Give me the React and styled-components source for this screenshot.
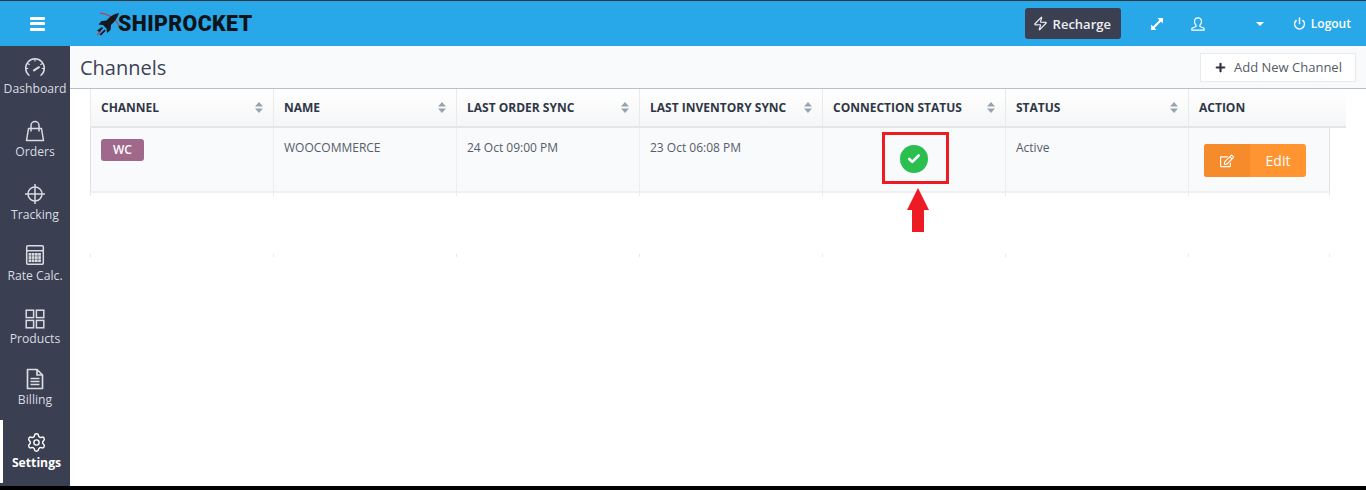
import React from 'react';
import styled, { createGlobalStyle } from 'styled-components';
import { Settings, Zap, Power, Plus, Check } from 'lucide-react';
import { FaRegEdit } from 'react-icons/fa';

const columns = [
  { title: 'Channel', sort: true },
  { title: 'Name', sort: true },
  { title: 'Last Order Sync', sort: true },
  { title: 'Last Inventory Sync', sort: true },
  { title: 'Connection Status', sort: true },
  { title: 'Status', sort: true },
  { title: 'Action', sort: false },
];

const GaugeIcon = () => (
  <svg width="22" height="22" viewBox="0 0 22 22" fill="none" stroke="currentColor" strokeWidth="1.5" strokeLinecap="round">
    <path d="M5 18.200A9.300 9.300 0 1 1 17 18.200" />
    <path d="M11 2v2M3.600 6.500l1.600 1M18.400 6.500l-1.600 1M1.800 11.500h2M18.200 11.500h2" strokeWidth="1.200" />
    <path d="M10 13.400l5-3.200" strokeWidth="2" />
  </svg>
);

const BagIcon = () => (
  <svg width="20" height="22" viewBox="0 0 20 22" fill="none" stroke="currentColor" strokeWidth="1.500">
    <path d="M3.500 8.500h13l2 12H1.500z" strokeLinejoin="round" />
    <path d="M6 11.500V5.600a4 4 0 0 1 8 0v5.900" />
  </svg>
);

const TargetIcon = () => (
  <svg width="22" height="22" viewBox="0 0 22 22" fill="none" stroke="currentColor" strokeWidth="1.500">
    <circle cx="11" cy="11" r="7" />
    <path d="M11 1v20M1 11h20" />
  </svg>
);

const CalcIcon = () => (
  <svg width="20" height="22" viewBox="0 0 20 22">
    <rect x="1.700" y="1.700" width="16.600" height="18.600" rx="1" fill="none" stroke="currentColor" strokeWidth="1.500" />
    <rect x="1.700" y="6" width="16.600" height="1.500" fill="currentColor" />
    {[9, 12.200, 15.400].map(y =>
      [3.600, 6.800, 10, 13.200].map(x => (
        <rect key={`${x}-${y}`} x={x} y={y} width="2.700" height="2.700" fill="currentColor" />
      )),
    )}
  </svg>
);

const GridIcon = () => (
  <svg width="20" height="20" viewBox="0 0 20 20" fill="none" stroke="currentColor" strokeWidth="1.500">
    <rect x="1.200" y="1.200" width="7.400" height="7.400" />
    <rect x="11.400" y="1.200" width="7.400" height="7.400" />
    <rect x="1.200" y="11.400" width="7.400" height="7.400" />
    <rect x="11.400" y="11.400" width="7.400" height="7.400" />
  </svg>
);

const DocIcon = () => (
  <svg width="18" height="22" viewBox="0 0 18 22" fill="none" stroke="currentColor" strokeWidth="1.700">
    <path d="M1.500 1.500h9.500l5.500 5.500v13.500h-15z" strokeLinejoin="round" />
    <path d="M11 1.500V7h5.500" />
    <path d="M4.500 10.500h9M4.500 13.500h9M4.500 16.500h9" />
  </svg>
);

const ExpandIcon = () => (
  <svg width="12" height="12" viewBox="0 0 12 12" fill="#fff">
    <path d="M6.500 0H12v5.500L10 3.500 3.500 10 5.500 12H0V6.500L2 8.500 8.500 2z" />
  </svg>
);

const UserIcon = () => (
  <svg width="14" height="14" viewBox="0 0 14 14" fill="none" stroke="#fff" strokeWidth="1.200">
    <path d="M7 .8c-2.200 0-3.500 1.600-3.500 3.700 0 1.600.8 3 1.600 3.700v1.300L.9 11.300v1.900h12.200v-1.900L8.900 9.500V8.200c.8-.7 1.600-2.100 1.600-3.700C10.500 2.400 9.200.8 7 .8z" strokeLinejoin="round" />
  </svg>
);

const RocketLogo = () => (
  <svg width="24" height="26" viewBox="0 0 24 26">
    <path d="M3 2c8 .5 15 5 20 14M0 24l4-4" fill="none" stroke="#d0303c" strokeWidth="1.100" />
    <path d="M22 2C16.500 3 12.500 6 9.500 9.500L4.500 10 1.500 13.500l4.500.5 3.500 3.500.5 4.500 3.500-3 .5-5C17.500 11 20.500 7 22 2z" fill="#14181f" />
    <path d="M0 19.500l5-3.500 1.200 1.200-4 3.800zM2.500 23.500l5-5 1.200 1.200L4 24.500z" fill="#14181f" />
  </svg>
);

const SortIcon = () => (
  <svg width="8" height="11" viewBox="0 0 8 11" fill="#98a3ad">
    <path d="M4 0l4 4.500H0zM0 6.500h8L4 11z" />
  </svg>
);

const GlobalStyle = createGlobalStyle`
  html, body {
    margin: 0;
    height: 490px;
    overflow: hidden;
    background: #fff;
    font-family: "Open Sans", "Liberation Sans", sans-serif;
  }
  * {
    box-sizing: border-box;
  }
`;

const Page = styled.div`
  display: flex;
  flex-direction: column;
  width: 1366px;
  height: 490px;
`;

const Header = styled.header`
  display: flex;
  align-items: center;
  flex: 0 0 46px;
  border-top: 1px solid #33383f;
  background: #29a8e9;
  color: #fff;
`;

const Burger = styled.div`
  display: flex;
  flex-direction: column;
  gap: 2.500px;
  margin-left: 30px;
  width: 15px;

  span {
    height: 3px;
    background: #fff;
    border-radius: 1px;
  }
`;

const Logo = styled.div`
  display: flex;
  align-items: center;
  margin-left: 52px;
`;

const LogoText = styled.span`
  display: inline-block;
  margin-left: -3px;
  color: #10141a;
  font-family: "Roboto", "Liberation Sans", sans-serif;
  font-size: 22px;
  font-weight: 900;
  letter-spacing: 0.4px;
  line-height: 26px;
  transform: scaleX(0.97);
  transform-origin: left center;
`;

const HeaderRight = styled.div`
  display: flex;
  align-items: center;
  margin-left: auto;
  padding-right: 15px;
`;

const RechargeButton = styled.div`
  display: flex;
  align-items: center;
  justify-content: center;
  gap: 5px;
  width: 96px;
  height: 31px;
  padding-right: 2px;
  border-radius: 3px;
  background: #3a3f51;
  color: #eceef2;
  font-size: 13px;
  font-weight: 600;
`;

const HeaderIcon = styled.span`
  display: flex;
  align-items: center;
  margin-left: ${({ $gap }) => $gap}px;
`;

const Caret = styled.span`
  margin-left: 51px;
  border-left: 4px solid transparent;
  border-right: 4px solid transparent;
  border-top: 4px solid #fff;
`;

const Logout = styled.span`
  margin-left: 5px;
  font-size: 12px;
  font-weight: 600;
`;

const Body = styled.div`
  display: flex;
  flex: 1;
  min-height: 0;
`;

const Sidebar = styled.nav`
  flex: 0 0 70px;
  background: #3a3f51;
`;

const NavItem = styled.div`
  display: flex;
  flex-direction: column;
  align-items: center;
  justify-content: flex-end;
  height: ${({ $h }) => $h}px;
  padding-bottom: 12px;
  border-left: ${({ $active }) => ($active ? '3px solid #fff' : 'none')};
  color: ${({ $active }) => ($active ? '#fff' : '#d9dce2')};
  font-size: 12.200px;
  font-weight: ${({ $active }) => ($active ? 700 : 400)};
  line-height: 16px;
  white-space: nowrap;

  svg {
    margin-bottom: 2px;
  }
`;

const Main = styled.main`
  flex: 1;
  min-width: 0;
`;

const TitleBar = styled.div`
  display: flex;
  align-items: center;
  justify-content: space-between;
  height: 43px;
  padding: 0 10px;
  background: #f9fafc;
  border-bottom: 1px solid #bcbfc4;
`;

const Title = styled.h1`
  margin: 0;
  color: #3c4354;
  font-size: 20px;
  font-weight: 400;
`;

const AddButton = styled.div`
  display: flex;
  align-items: center;
  gap: 7px;
  width: 156px;
  height: 29px;
  padding-left: 13px;
  border: 1px solid #e8eaed;
  background: #fff;
  color: #555b68;
  font-size: 13px;
`;

const Table = styled.div`
  margin-left: 20px;
`;

const Grid = styled.div`
  display: grid;
  grid-template-columns: repeat(6, 183px) ${({ $last }) => $last}px;
`;

const HeadCell = styled.div`
  display: flex;
  align-items: center;
  justify-content: space-between;
  height: 39px;
  padding: 0 10px;
  border-left: 1px solid #e8eaec;
  border-bottom: 2px solid #e3e5e8;
  background: linear-gradient(#ffffff, #f5f6f7);
  color: #2f3747;
  font-size: 12px;
  font-weight: 700;
  text-transform: uppercase;
`;

const Cell = styled.div`
  position: relative;
  height: 65px;
  padding: 11px 10px 0;
  border-left: 1px solid ${({ $first }) => ($first ? '#dfe1e4' : '#eceef0')};
  border-right: ${({ $end }) => ($end ? '1px solid #e2e4e7' : 'none')};
  border-bottom: 2px solid #eef0f2;
  background: #f9fafc;
  color: #565c68;
  font-size: 12px;
  line-height: 18px;
`;

const Badge = styled.span`
  display: inline-flex;
  align-items: center;
  justify-content: center;
  width: 43px;
  height: 22px;
  border-radius: 3px;
  background: #a0698c;
  color: #fff;
  font-size: 12px;
  font-weight: 600;
`;

const StatusCell = styled(Cell)`
  display: flex;
  justify-content: center;
  padding-top: 17px;
`;

const CheckCircle = styled.span`
  display: flex;
  align-items: center;
  justify-content: center;
  width: 28px;
  height: 28px;
  border-radius: 50%;
  background: #2bbf50;
  color: #fff;
`;

const Highlight = styled.div`
  position: absolute;
  top: 4px;
  left: 59px;
  width: 67px;
  height: 52px;
  border: 3px solid #ed1c24;
`;

const RedArrow = styled.svg`
  position: absolute;
  top: 60px;
  left: 84px;
  z-index: 1;
`;

const EditButton = styled.div`
  display: flex;
  width: 102px;
  height: 33px;
  margin: 5px 0 0 5px;
  border-radius: 3px;
  overflow: hidden;
  background: #ff9431;
  color: #fff;
  font-size: 14px;
`;

const EditIcon = styled.span`
  display: flex;
  align-items: center;
  justify-content: center;
  width: 46px;
  background: #f58b2a;
`;

const EditLabel = styled.span`
  flex: 1;
  align-self: center;
  text-align: center;
`;

const Tick = styled.div`
  height: 3px;
  border-left: 1px solid #e6e8ea;
  border-right: ${({ $end }) => ($end ? '1px solid #e6e8ea' : 'none')};
`;

const TickRow = styled(Grid)`
  margin-top: ${({ $top }) => $top}px;
`;

const Footer = styled.div`
  flex: 0 0 4px;
  background: #000;
`;

const navItems = [
  { label: 'Dashboard', icon: <GaugeIcon />, h: 63 },
  { label: 'Orders', icon: <BagIcon />, h: 63 },
  { label: 'Tracking', icon: <TargetIcon />, h: 63 },
  { label: 'Rate Calc.', icon: <CalcIcon />, h: 61 },
  { label: 'Products', icon: <GridIcon />, h: 63 },
  { label: 'Billing', icon: <DocIcon />, h: 61 },
  { label: 'Settings', icon: <Settings size={21} strokeWidth={1.6} />, h: 63, active: true },
];

const App = () => {
  return (
    <Page>
      <GlobalStyle />
      <Header>
        <Burger>
          <span />
          <span />
          <span />
        </Burger>
        <Logo>
          <RocketLogo />
          <LogoText>SHIPROCKET</LogoText>
        </Logo>
        <HeaderRight>
          <RechargeButton>
            <Zap size={15} strokeWidth={2} />
            Recharge
          </RechargeButton>
          <HeaderIcon $gap={30}>
            <ExpandIcon />
          </HeaderIcon>
          <HeaderIcon $gap={28}>
            <UserIcon />
          </HeaderIcon>
          <Caret />
          <HeaderIcon $gap={29}>
            <Power size={13} strokeWidth={2.8} />
          </HeaderIcon>
          <Logout>Logout</Logout>
        </HeaderRight>
      </Header>
      <Body>
        <Sidebar>
          {navItems.map(item => (
            <NavItem key={item.label} $h={item.h} $active={item.active}>
              {item.icon}
              {item.label}
            </NavItem>
          ))}
        </Sidebar>
        <Main>
          <TitleBar>
            <Title>Channels</Title>
            <AddButton>
              <Plus size={13} strokeWidth={4} color="#2f3340" />
              Add New Channel
            </AddButton>
          </TitleBar>
          <Table>
            <Grid $last={158}>
              {columns.map(col => (
                <HeadCell key={col.title}>
                  {col.title}
                  {col.sort && <SortIcon />}
                </HeadCell>
              ))}
            </Grid>
            <Grid $last={142}>
              <Cell $first>
                <Badge>WC</Badge>
              </Cell>
              <Cell>WOOCOMMERCE</Cell>
              <Cell>24 Oct 09:00 PM</Cell>
              <Cell>23 Oct 06:08 PM</Cell>
              <StatusCell>
                <CheckCircle>
                  <Check size={14} strokeWidth={4.5} />
                </CheckCircle>
                <Highlight />
                <RedArrow width="22" height="44" viewBox="0 0 22 44">
                  <path d="M11 0L22 22H17V44H5V22H0z" fill="#ed1c24" />
                </RedArrow>
              </StatusCell>
              <Cell>Active</Cell>
              <Cell $end>
                <EditButton>
                  <EditIcon>
                    <FaRegEdit size={14} />
                  </EditIcon>
                  <EditLabel>Edit</EditLabel>
                </EditButton>
              </Cell>
            </Grid>
            <TickRow $last={142} $top={0}>
              {columns.map((col, i) => (
                <Tick key={col.title} $end={i === 6} />
              ))}
            </TickRow>
            <TickRow $last={142} $top={58}>
              {columns.map((col, i) => (
                <Tick key={col.title} $end={i === 6} />
              ))}
            </TickRow>
          </Table>
        </Main>
      </Body>
      <Footer />
    </Page>
  );
};

export default App;
